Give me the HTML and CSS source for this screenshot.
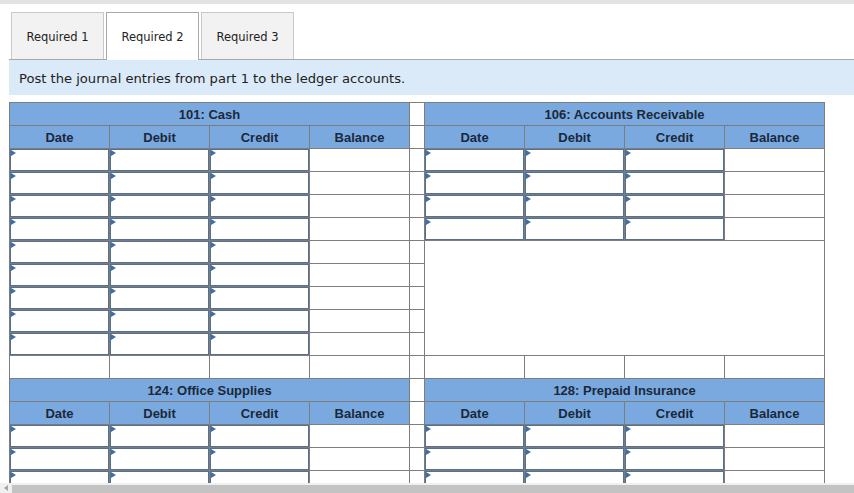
FILE: index.html
```html
<!DOCTYPE html>
<html>
<head>
<meta charset="utf-8">
<link rel="stylesheet" href="styles.css">
</head>
<body>
<div class="topbar"></div>
<div class="main">
  <div class="tabs">
    <div class="tab">Required 1</div>
    <div class="tab active">Required 2</div>
    <div class="tab">Required 3</div>
  </div>
  <div class="band">Post the journal entries from part 1 to the ledger accounts.</div>
  <table class="ledger">
    <colgroup>
      <col class="c"><col class="c"><col class="c"><col class="c">
      <col class="sp">
      <col class="c"><col class="c"><col class="c"><col class="c">
    </colgroup>
    <tr class="title"><th colspan="4">101: Cash</th><td class="gap"></td><th colspan="4">106: Accounts Receivable</th></tr>
    <tr class="head"><th>Date</th><th>Debit</th><th>Credit</th><th>Balance</th><td class="gap"></td><th>Date</th><th>Debit</th><th>Credit</th><th>Balance</th></tr>
    <tr>
      <td class="in"><div class="box"><input type="text"><span class="flag"></span></div></td>
      <td class="in"><div class="box"><input type="text"><span class="flag"></span></div></td>
      <td class="in"><div class="box"><input type="text"><span class="flag"></span></div></td>
      <td class="bal"></td><td class="gap"></td>
      <td class="in"><div class="box"><input type="text"><span class="flag"></span></div></td>
      <td class="in"><div class="box"><input type="text"><span class="flag"></span></div></td>
      <td class="in"><div class="box"><input type="text"><span class="flag"></span></div></td>
      <td class="bal"></td>
    </tr>
    <tr>
      <td class="in"><div class="box"><input type="text"><span class="flag"></span></div></td>
      <td class="in"><div class="box"><input type="text"><span class="flag"></span></div></td>
      <td class="in"><div class="box"><input type="text"><span class="flag"></span></div></td>
      <td class="bal"></td><td class="gap"></td>
      <td class="in"><div class="box"><input type="text"><span class="flag"></span></div></td>
      <td class="in"><div class="box"><input type="text"><span class="flag"></span></div></td>
      <td class="in"><div class="box"><input type="text"><span class="flag"></span></div></td>
      <td class="bal"></td>
    </tr>
    <tr>
      <td class="in"><div class="box"><input type="text"><span class="flag"></span></div></td>
      <td class="in"><div class="box"><input type="text"><span class="flag"></span></div></td>
      <td class="in"><div class="box"><input type="text"><span class="flag"></span></div></td>
      <td class="bal"></td><td class="gap"></td>
      <td class="in"><div class="box"><input type="text"><span class="flag"></span></div></td>
      <td class="in"><div class="box"><input type="text"><span class="flag"></span></div></td>
      <td class="in"><div class="box"><input type="text"><span class="flag"></span></div></td>
      <td class="bal"></td>
    </tr>
    <tr>
      <td class="in"><div class="box"><input type="text"><span class="flag"></span></div></td>
      <td class="in"><div class="box"><input type="text"><span class="flag"></span></div></td>
      <td class="in"><div class="box"><input type="text"><span class="flag"></span></div></td>
      <td class="bal"></td><td class="gap"></td>
      <td class="in"><div class="box"><input type="text"><span class="flag"></span></div></td>
      <td class="in"><div class="box"><input type="text"><span class="flag"></span></div></td>
      <td class="in"><div class="box"><input type="text"><span class="flag"></span></div></td>
      <td class="bal"></td>
    </tr>
    <tr>
      <td class="in"><div class="box"><input type="text"><span class="flag"></span></div></td>
      <td class="in"><div class="box"><input type="text"><span class="flag"></span></div></td>
      <td class="in"><div class="box"><input type="text"><span class="flag"></span></div></td>
      <td class="bal"></td><td class="gap"></td>
      <td class="blank" colspan="4" rowspan="5"></td>
    </tr>
    <tr>
      <td class="in"><div class="box"><input type="text"><span class="flag"></span></div></td>
      <td class="in"><div class="box"><input type="text"><span class="flag"></span></div></td>
      <td class="in"><div class="box"><input type="text"><span class="flag"></span></div></td>
      <td class="bal"></td><td class="gap"></td>
    </tr>
    <tr>
      <td class="in"><div class="box"><input type="text"><span class="flag"></span></div></td>
      <td class="in"><div class="box"><input type="text"><span class="flag"></span></div></td>
      <td class="in"><div class="box"><input type="text"><span class="flag"></span></div></td>
      <td class="bal"></td><td class="gap"></td>
    </tr>
    <tr>
      <td class="in"><div class="box"><input type="text"><span class="flag"></span></div></td>
      <td class="in"><div class="box"><input type="text"><span class="flag"></span></div></td>
      <td class="in"><div class="box"><input type="text"><span class="flag"></span></div></td>
      <td class="bal"></td><td class="gap"></td>
    </tr>
    <tr>
      <td class="in"><div class="box"><input type="text"><span class="flag"></span></div></td>
      <td class="in"><div class="box"><input type="text"><span class="flag"></span></div></td>
      <td class="in"><div class="box"><input type="text"><span class="flag"></span></div></td>
      <td class="bal"></td><td class="gap"></td>
    </tr>
    <tr>
      <td class="bal"></td><td class="bal"></td><td class="bal"></td><td class="bal"></td><td class="gap"></td>
      <td class="bal"></td><td class="bal"></td><td class="bal"></td><td class="bal"></td>
    </tr>
    <tr class="title"><th colspan="4">124: Office Supplies</th><td class="gap"></td><th colspan="4">128: Prepaid Insurance</th></tr>
    <tr class="head"><th>Date</th><th>Debit</th><th>Credit</th><th>Balance</th><td class="gap"></td><th>Date</th><th>Debit</th><th>Credit</th><th>Balance</th></tr>
    <tr>
      <td class="in"><div class="box"><input type="text"><span class="flag"></span></div></td>
      <td class="in"><div class="box"><input type="text"><span class="flag"></span></div></td>
      <td class="in"><div class="box"><input type="text"><span class="flag"></span></div></td>
      <td class="bal"></td><td class="gap"></td>
      <td class="in"><div class="box"><input type="text"><span class="flag"></span></div></td>
      <td class="in"><div class="box"><input type="text"><span class="flag"></span></div></td>
      <td class="in"><div class="box"><input type="text"><span class="flag"></span></div></td>
      <td class="bal"></td>
    </tr>
    <tr>
      <td class="in"><div class="box"><input type="text"><span class="flag"></span></div></td>
      <td class="in"><div class="box"><input type="text"><span class="flag"></span></div></td>
      <td class="in"><div class="box"><input type="text"><span class="flag"></span></div></td>
      <td class="bal"></td><td class="gap"></td>
      <td class="in"><div class="box"><input type="text"><span class="flag"></span></div></td>
      <td class="in"><div class="box"><input type="text"><span class="flag"></span></div></td>
      <td class="in"><div class="box"><input type="text"><span class="flag"></span></div></td>
      <td class="bal"></td>
    </tr>
    <tr>
      <td class="in"><div class="box"><input type="text"><span class="flag"></span></div></td>
      <td class="in"><div class="box"><input type="text"><span class="flag"></span></div></td>
      <td class="in"><div class="box"><input type="text"><span class="flag"></span></div></td>
      <td class="bal"></td><td class="gap"></td>
      <td class="in"><div class="box"><input type="text"><span class="flag"></span></div></td>
      <td class="in"><div class="box"><input type="text"><span class="flag"></span></div></td>
      <td class="in"><div class="box"><input type="text"><span class="flag"></span></div></td>
      <td class="bal"></td>
    </tr>
  </table>
</div>
<div class="hscroll"><div class="harrow"><span class="tri"></span></div><div class="thumb"></div></div>
</body>
</html>
```

FILE: styles.css
```css
* { box-sizing: border-box; }
html, body { margin: 0; padding: 0; }
body {
  width: 854px;
  height: 493px;
  overflow: hidden;
  display: flex;
  flex-direction: column;
  background: #fff;
  font-family: "DejaVu Sans", Verdana, sans-serif;
  color: #222;
}
.topbar { height: 4px; flex: none; background: #e3e3e3; }
.main { flex: 1; overflow: hidden; padding-left: 9px; }
.tabs { display: flex; gap: 2px; margin-top: 8px; padding-left: 2px; height: 47px; }
.tab {
  width: 93px;
  height: 47px;
  padding-top: 1px;
  border: 1px solid #c9c9c9;
  border-bottom: none;
  background: #f2f2f2;
  display: flex;
  align-items: center;
  justify-content: center;
  font-size: 11.5px;
  color: #222;
}
.tab.active {
  background: #fff;
  border-color: #a9a9a9;
  height: 48px;
  padding-top: 0;
  padding-bottom: 0;
  position: relative;
  z-index: 1;
}
.band {
  border-top: 1px solid #a8a8a8;
  background: #dbeaf8;
  height: 36px;
  padding-left: 10px;
  padding-top: 1px;
  display: flex;
  align-items: center;
  font-size: 13.1px;
  color: #222;
}
.ledger {
  border-collapse: collapse;
  table-layout: fixed;
  width: 815px;
  margin-top: 7px;
  font-family: "Liberation Sans", Arial, sans-serif;
}
.ledger col.c { width: 100px; }
.ledger col.sp { width: 15px; }
.ledger tr { height: 23px; }
.ledger td, .ledger th { border: 1px solid #7d7d7d; padding: 0; }
.ledger th {
  background: #7aa9e0;
  color: #1b283a;
  font-size: 13px;
  font-weight: bold;
  text-align: center;
}
.ledger td.gap, .ledger td.bal, .ledger td.blank { background: #fff; }
.box { position: relative; height: 22px; }
.box input {
  display: block;
  width: 100%;
  height: 100%;
  margin: 0;
  padding: 0 4px;
  border: 1px solid #56708f;
  background: #fff;
  font: inherit;
  outline: none;
}
.flag {
  position: absolute;
  left: 1px;
  top: 1px;
  width: 0;
  height: 0;
  border-left: 5px solid #3f6da6;
  border-top: 3px solid transparent;
  border-bottom: 3px solid transparent;
}
.hscroll { height: 10px; flex: none; display: flex; background: #f0f0f0; }
.harrow { width: 12px; display: flex; align-items: center; justify-content: center; }
.tri {
  width: 0;
  height: 0;
  border-right: 4px solid #a3a3a3;
  border-top: 3px solid transparent;
  border-bottom: 3px solid transparent;
}
.thumb { flex: 1; background: #c3c3c3; margin-top: 2px; }
```
